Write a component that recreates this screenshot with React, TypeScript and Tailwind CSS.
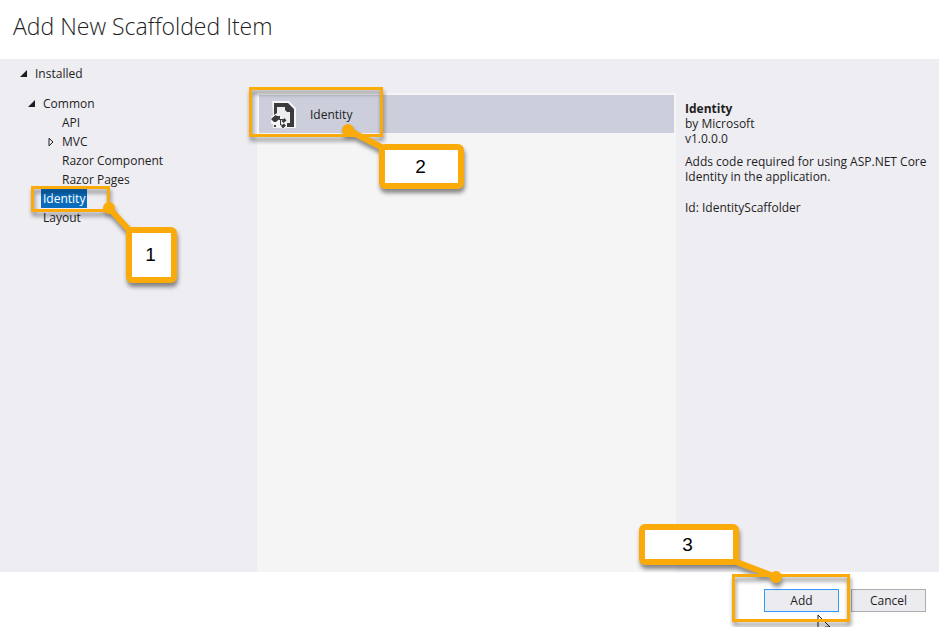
import type { ReactNode } from "react";

type Box = { x: number; y: number; w: number; h: number };

type CalloutProps = {
  place: string;
  width: number;
  height: number;
  frame: Box;
  dot: [number, number];
  joint: [number, number];
  label: Box;
  labelPlace: string;
  children: ReactNode;
};

/** Orange frame joined by a line to a numbered label. */
function Callout({ place, width, height, frame, dot, joint, label, labelPlace, children }: CalloutProps) {
  return (
    <div className={`pointer-events-none absolute ${place}`}>
      <svg
        width={width}
        height={height}
        aria-hidden="true"
        className="block overflow-visible drop-shadow-[1px_4px_2px_rgba(0,0,0,0.45)]"
      >
        <rect
          x={frame.x + 1.5}
          y={frame.y + 1.5}
          width={frame.w - 3}
          height={frame.h - 3}
          fill="none"
          stroke="#faab0a"
          strokeWidth="3"
        />
        <line x1={dot[0]} y1={dot[1]} x2={joint[0]} y2={joint[1]} stroke="#faab0a" strokeWidth="6" />
        <circle cx={dot[0]} cy={dot[1]} r="6" fill="#faab0a" />
        <rect
          x={label.x + 3}
          y={label.y + 3}
          width={label.w - 6}
          height={label.h - 6}
          rx="3"
          fill="#ffffff"
          stroke="#faab0a"
          strokeWidth="6"
        />
      </svg>
      <span
        className={`absolute flex items-center justify-center font-['Liberation_Sans',Arial,sans-serif] text-[19px] text-black ${labelPlace}`}
      >
        {children}
      </span>
    </div>
  );
}

function OpenArrow() {
  return (
    <svg width="7" height="7" aria-hidden="true" className="shrink-0">
      <path d="M7 0v7H0z" fill="#1e1e1e" />
    </svg>
  );
}

function ClosedArrow() {
  return (
    <svg width="6" height="10" aria-hidden="true" className="shrink-0">
      <path d="M1 1.2v7.6L5 5z" fill="none" stroke="#1e1e1e" strokeWidth="1" />
    </svg>
  );
}

function ScaffoldIcon() {
  return (
    <svg width="26" height="30" viewBox="0 0 26 30" aria-hidden="true" className="shrink-0">
      <path d="M1 2h17l7 7v20H15l-2 1-4-1H2v-4H0v-7l2-2z" fill="#f5f5f5" />
      <path d="M6 8h9v4h4v12h-4l-7-8H6z" fill="#ededf0" />
      <path d="M3 4h14l6 6v18h-7v-4h3V13h-3l-2-2V8H6v6l-3 2z" fill="#3b3b3f" />
      <path d="M0 20l4.500-4 1.500 1 3 0v2.500L5 23H3z" fill="#3b3b3f" />
      <path d="M8 20.500h4M9.500 20.500v5.500h2" fill="none" stroke="#3b3b3f" strokeWidth="1" />
      <path d="M13.500 19l2 2.500-3 2.500-2-2zM13 24.500l2 2-3 3-2-2.500zM3 26h2v2H3z" fill="#3b3b3f" />
    </svg>
  );
}

export default function App() {
  return (
    <main className="relative flex min-h-screen flex-col overflow-hidden bg-white font-['Open_Sans','Noto_Sans',sans-serif] text-xs text-[#1e1e1e]">
      <header className="h-[59px] px-[13px] pt-2">
        <h1 className="text-[23px] leading-9 font-light">Add New Scaffolded Item</h1>
      </header>

      <div className="flex flex-1 bg-[#eeedf2]">
        <nav aria-label="Categories" className="w-[257px] shrink-0 pt-[5px]">
          <ul>
            <li>
              <div className="flex h-[19px] items-center gap-2 pl-5">
                <OpenArrow />
                Installed
              </div>
              <ul className="mt-[11px] leading-[19px]">
                <li>
                  <div className="flex items-center gap-2 pl-7">
                    <OpenArrow />
                    Common
                  </div>
                  <ul>
                    <li className="pl-[62px]">API</li>
                    <li className="flex items-center gap-2 pl-12">
                      <ClosedArrow />
                      MVC
                    </li>
                    <li className="pl-[62px]">Razor Component</li>
                    <li className="pl-[62px]">Razor Pages</li>
                  </ul>
                </li>
                <li className="pl-[41px]">
                  <span className="inline-block bg-[#0a6cbd] px-0.5 text-white">Identity</span>
                </li>
                <li className="pl-[43px]">Layout</li>
              </ul>
            </li>
          </ul>
        </nav>

        <section aria-label="Templates" className="mt-[34px] flex-1 bg-[#f5f5f5] p-0.5">
          <div className="flex h-[38px] items-center gap-[13px] bg-[#cccedb] pl-3">
            <ScaffoldIcon />
            <span className="pt-0.5">Identity</span>
          </div>
        </section>

        <aside className="w-[263px] shrink-0 pt-[42px] pr-1 pl-[9px] leading-[15px]">
          <h2 className="font-bold">Identity</h2>
          <p>by Microsoft</p>
          <p>v1.0.0.0</p>
          <p className="mt-2">Adds code required for using ASP.NET Core Identity in the application.</p>
          <p className="mt-4">Id: IdentityScaffolder</p>
        </aside>
      </div>

      <footer className="flex h-[55px] items-start justify-end gap-3 pt-[17px] pr-[13px]">
        <button type="button" className="h-[23px] w-[75px] border border-[#3399ff] bg-[#ecebf0]">
          Add
        </button>
        <button type="button" className="h-[23px] w-[75px] border border-[#acacac] bg-[#ecebf0]">
          Cancel
        </button>
      </footer>

      <svg width="14" height="20" aria-hidden="true" className="absolute right-[108px] -bottom-[7px]">
        <path d="M1 1v17l4-4 3 6 3-1-3-6h5z" fill="#ffffff" stroke="#1e1e1e" />
      </svg>

      <Callout
        place="top-[186px] left-[31px]"
        width={146}
        height={97}
        frame={{ x: 0, y: 0, w: 79, h: 26 }}
        dot={[78, 22]}
        joint={[100, 46]}
        label={{ x: 95, y: 41, w: 51, h: 56 }}
        labelPlace="top-[41px] left-[94px] h-[56px] w-[51px]"
      >
        1
      </Callout>
      <Callout
        place="top-[87px] left-[249px]"
        width={215}
        height={102}
        frame={{ x: 0, y: 0, w: 134, h: 50 }}
        dot={[99, 43]}
        joint={[136, 62]}
        label={{ x: 130, y: 57, w: 85, h: 45 }}
        labelPlace="top-[57px] left-[129px] h-[45px] w-[85px]"
      >
        2
      </Callout>
      <Callout
        place="right-[89px] bottom-[5px]"
        width={211}
        height={98}
        frame={{ x: 93, y: 50, w: 118, h: 48 }}
        dot={[137, 53]}
        joint={[95, 37]}
        label={{ x: 0, y: 0, w: 100, h: 41 }}
        labelPlace="top-0 left-0 h-[41px] w-[97px]"
      >
        3
      </Callout>
    </main>
  );
}
